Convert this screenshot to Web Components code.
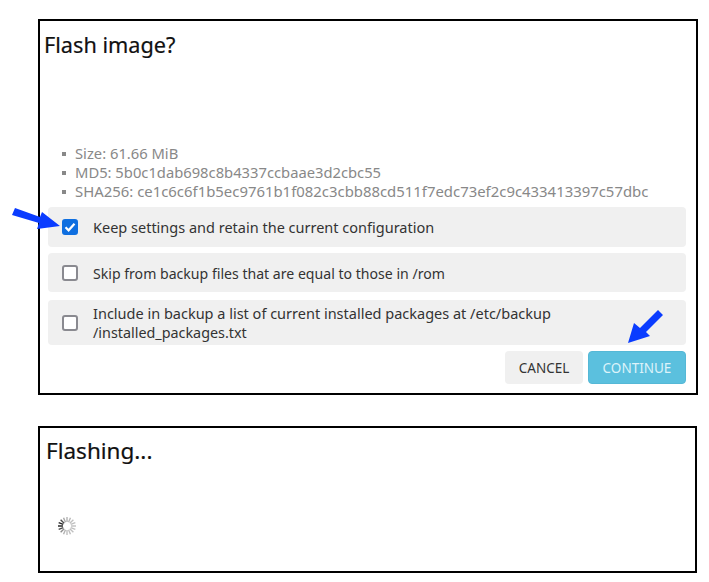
<!DOCTYPE html>
<html><head><meta charset="utf-8">
<style>
html,body{margin:0;padding:0;background:#fff}
body{font-family:"Noto Sans","Noto Sans CJK SC",sans-serif;width:709px;height:582px;overflow:hidden;position:relative}
</style></head>
<body>
<flash-page>
  <modal-panel style="height:372px;margin-top:19px;font-size:21.7px" title="Flash image?" tx="4" ty="9">
    <info-list>
      <li>Size: 61.66 MiB</li>
      <li>MD5: 5b0c1dab698c8b4337ccbaae3d2cbc55</li>
      <li style="font-size:14.9px">SHA256: ce1c6c6f1b5ec9761b1f082c3cbb88cd511f7edc73ef2c9c433413397c57dbc</li>
    </info-list>
    <check-row checked h="40" mt="6">Keep settings and retain the current configuration</check-row>
    <check-row style="font-size:14.1px;padding-top:1px" h="39" mt="6">Skip from backup files that are equal to those in /rom</check-row>
    <check-row h="45" mt="8">Include in backup a list of current installed packages at /etc/backup<br><span style="font-size:14.35px">/installed_packages.txt</span></check-row>
    <button-bar>
      <flat-button>CANCEL</flat-button>
      <flat-button primary>CONTINUE</flat-button>
    </button-bar>
  </modal-panel>
  <modal-panel style="height:143px;margin-top:31px;width:655px;font-size:22.5px" title="Flashing..." tx="6" ty="8">
    <spin-ner></spin-ner>
  </modal-panel>
</flash-page>
<blue-arrow style="left:10px;top:205px" d="M2 10 L5 3 L30 12 L32 7 L50 21 L27 24 L29 18 Z"></blue-arrow>
<blue-arrow style="left:626px;top:307px" d="M32 3 L37 8 L20 25 L24 29 L2 36 L8 16 L14 21 Z"></blue-arrow>
<script>
function def(name, html, init){
  customElements.define(name, class extends HTMLElement{
    constructor(){super();this.attachShadow({mode:'open'}).innerHTML=html;}
    connectedCallback(){ if(init) init(this,this.shadowRoot); }
  });
}
def('flash-page',`<style>:host{display:block}</style><slot></slot>`);
def('modal-panel',`<style>
:host{display:block;box-sizing:content-box;width:656px;margin-left:38px;border:2px solid #000;background:#fff;color:#000}
h3{margin:0;font-size:inherit;font-weight:400;line-height:29px;color:#111;-webkit-text-stroke:.2px #111}
.body{display:flex;flex-direction:column;padding:0 10px 0 8px}
</style><h3 id="t"></h3><div class="body"><slot></slot></div>`,(el,s)=>{
  const t=s.getElementById('t');t.textContent=el.getAttribute('title');el.removeAttribute('title');
  t.style.paddingLeft=el.getAttribute('tx')+'px';t.style.paddingTop=el.getAttribute('ty')+'px';
});
def('info-list',`<style>
:host{display:block;margin:85px 0 0 8px;font-size:14.75px;line-height:19px;color:#888}
::slotted(li){list-style:none;position:relative;padding-left:19px;white-space:nowrap}
::slotted(li)::before{content:"";position:absolute;left:6px;top:8px;width:4px;height:4px;background:#888}
</style><slot></slot>`);
def('check-row',`<style>
:host{display:flex;align-items:center;box-sizing:border-box;background:#f0f0f0;border-radius:4px;padding-left:14px;font-size:14.5px;line-height:19px;color:#333}
.b{flex:none;box-sizing:border-box;width:16px;height:16px;border:2px solid #8a8a90;border-radius:3px;background:#fff;margin-right:15px;display:flex;align-items:center;justify-content:center}
:host([checked]) .b{background:#0f6fe0;border-color:#0f6fe0}
svg{display:none;width:12px;height:12px}
:host([checked]) svg{display:block}
.t{white-space:nowrap}
</style><span class="b"><svg viewBox="0 0 12 12"><path d="M1.5 6.3 L4.6 9.3 L10.5 2.8" fill="none" stroke="#fff" stroke-width="2.2"/></svg></span><span class="t"><slot></slot></span>`,(el)=>{
  el.style.height=el.getAttribute('h')+'px';el.style.marginTop=el.getAttribute('mt')+'px';
});
def('button-bar',`<style>:host{display:flex;justify-content:flex-end;gap:5px;margin-top:6px}</style><slot></slot>`);
def('flat-button',`<style>
:host{display:flex;align-items:center;justify-content:center;height:33px;width:78px;box-sizing:border-box;padding-top:1px;background:#f0f0f0;border-radius:4px;font-size:13.5px;color:#333}
:host([primary]){width:98px;background:#5bc0de;color:#ddf3fa;border:1px solid #55b8d6}
</style><slot></slot>`);
def('spin-ner',`<style>:host{display:block;width:20px;height:20px;margin:51px 0 0 9px}svg{display:block}</style><svg id="s" width="20" height="20" viewBox="0 0 20 20"></svg>`,(el,s)=>{
  let h='';
  const cols=[.85,.7,.35,.3,.28,.25,.25,.25,.25,.25,.25,.25,.3,.45,.7,.9];
  for(let i=0;i<16;i++){h+=`<rect x="9.3" y="1" width="1.4" height="5" fill="#000" opacity="${cols[i]}" transform="rotate(${i*22.5-67.5} 10 10)"/>`;}
  s.getElementById('s').innerHTML=h;
});
def('blue-arrow',`<style>:host{position:absolute;display:block;width:54px;height:42px}svg{display:block}</style><svg width="54" height="42" viewBox="0 0 54 42"><path id="p" fill="#0a3cff"/></svg>`,(el,s)=>{
  s.getElementById('p').setAttribute('d',el.getAttribute('d'));
});
</script>
</body></html>
